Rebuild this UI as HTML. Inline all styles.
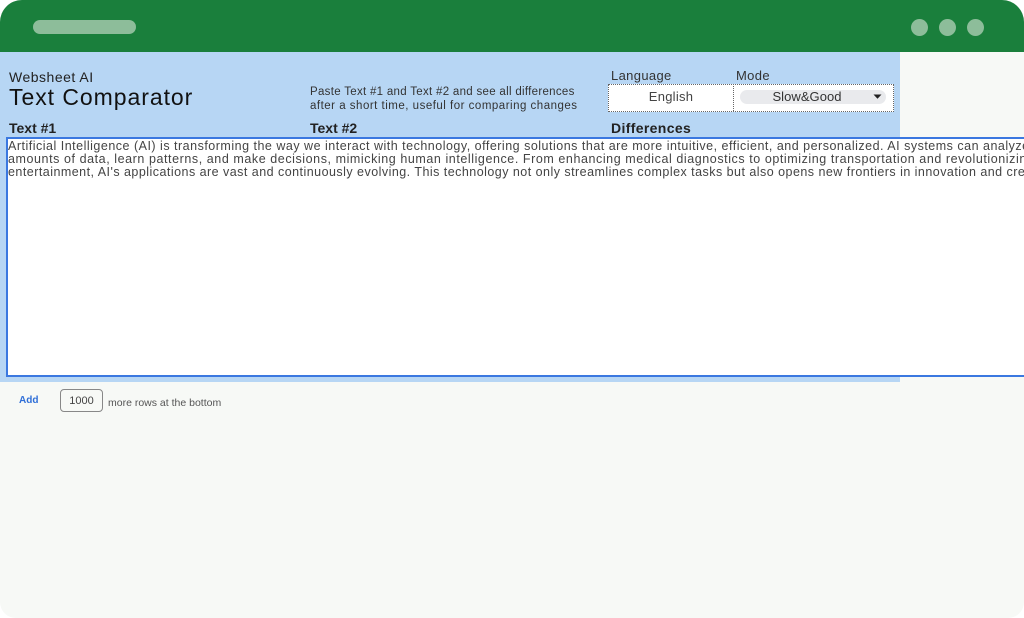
<!DOCTYPE html>
<html><head><meta charset="utf-8">
<style>
html,body{margin:0;padding:0;background:#fff}
#f{position:relative;width:1024px;height:618px;overflow:hidden;background:#f7f9f6;border-radius:22px 22px 16px 16px;font-family:"Liberation Sans",sans-serif}
.a{position:absolute;white-space:nowrap;color:#333}
.pale{position:absolute;background:#8dbd9a}
</style></head><body>
<div id="f">
<div class="a" style="left:0;top:0;width:1024px;height:52px;background:#1a7f3c"></div>
<div class="pale" style="left:33px;top:20px;width:103px;height:14px;border-radius:7px"></div>
<div class="pale" style="left:911px;top:19px;width:17px;height:17px;border-radius:50%"></div>
<div class="pale" style="left:939px;top:19px;width:17px;height:17px;border-radius:50%"></div>
<div class="pale" style="left:967px;top:19px;width:17px;height:17px;border-radius:50%"></div>
<div class="a" style="left:0;top:52px;width:900px;height:330px;background:#b7d6f4"></div>
<div class="a" style="left:9px;top:69px;font-size:14px;line-height:16px;letter-spacing:.5px;color:#222">Websheet AI</div>
<div class="a" style="left:9px;top:84px;font-size:23px;line-height:26px;letter-spacing:.95px;color:#111">Text Comparator</div>
<div class="a" style="left:310px;top:86px;font-size:11.5px;line-height:13.5px;letter-spacing:.3px;color:#333">Paste Text #1 and Text #2 and see all differences</div>
<div class="a" style="left:310px;top:99.5px;font-size:11.5px;line-height:13.5px;letter-spacing:.5px;color:#333">after a short time, useful for comparing changes</div>
<div class="a" style="left:611px;top:68px;font-size:13px;line-height:15px;letter-spacing:.35px;color:#333">Language</div>
<div class="a" style="left:736px;top:68px;font-size:13px;line-height:15px;letter-spacing:.35px;color:#333">Mode</div>
<div class="a" style="left:608px;top:84px;width:284px;height:26px;background:#fff;border:1px dotted #666"></div>
<div class="a" style="left:733px;top:84px;width:0;height:27px;border-left:1px dotted #666"></div>
<div class="a" style="left:609px;top:89px;width:124px;text-align:center;font-size:13px;line-height:15px;letter-spacing:.25px;color:#444">English</div>
<div class="a" style="left:740px;top:90px;width:146px;height:14px;border-radius:7px;background:#e9eaed"></div>
<div class="a" style="left:740px;top:90px;width:134px;text-align:center;font-size:13px;line-height:14px;letter-spacing:.05px;color:#333">Slow&amp;Good</div>
<svg class="a" style="left:873px;top:94px" width="10" height="6"><path d="M0.5 0.5H8.5L4.5 4.8Z" fill="#222"/></svg>
<div class="a" style="left:9px;top:120px;font-size:14px;line-height:16px;font-weight:bold;letter-spacing:0;color:#222">Text #1</div>
<div class="a" style="left:310px;top:120px;font-size:14px;line-height:16px;font-weight:bold;letter-spacing:0;color:#222">Text #2</div>
<div class="a" style="left:611px;top:120px;font-size:14px;line-height:16px;font-weight:bold;letter-spacing:.35px;color:#222">Differences</div>
<div class="a" style="left:6px;top:137px;width:1030px;height:236px;background:#fff;border:2px solid #3b78e0"></div>
<div class="a" style="left:8px;top:140px;font-size:12.5px;line-height:13px;letter-spacing:.5px;color:#444">Artificial Intelligence (AI) is transforming the way we interact with technology, offering solutions that are more intuitive, efficient, and personalized. AI systems can analyze vast</div>
<div class="a" style="left:8px;top:153px;font-size:12.5px;line-height:13px;letter-spacing:.57px;color:#444">amounts of data, learn patterns, and make decisions, mimicking human intelligence. From enhancing medical diagnostics to optimizing transportation and revolutionizing</div>
<div class="a" style="left:8px;top:166px;font-size:12.5px;line-height:13px;letter-spacing:.47px;color:#444">entertainment, AI's applications are vast and continuously evolving. This technology not only streamlines complex tasks but also opens new frontiers in innovation and creativity.</div>
<div class="a" style="left:19px;top:394px;font-size:10px;line-height:13px;font-weight:bold;color:#2f6fd8">Add</div>
<div class="a" style="left:60px;top:389px;width:41px;height:21px;border:1px solid #888;border-radius:4px;background:#f7f9f6;text-align:center;font-size:11px;line-height:22px;color:#444">1000</div>
<div class="a" style="left:108px;top:397px;font-size:10.5px;line-height:13px;color:#555">more rows at the bottom</div>
</div>
</body></html>
